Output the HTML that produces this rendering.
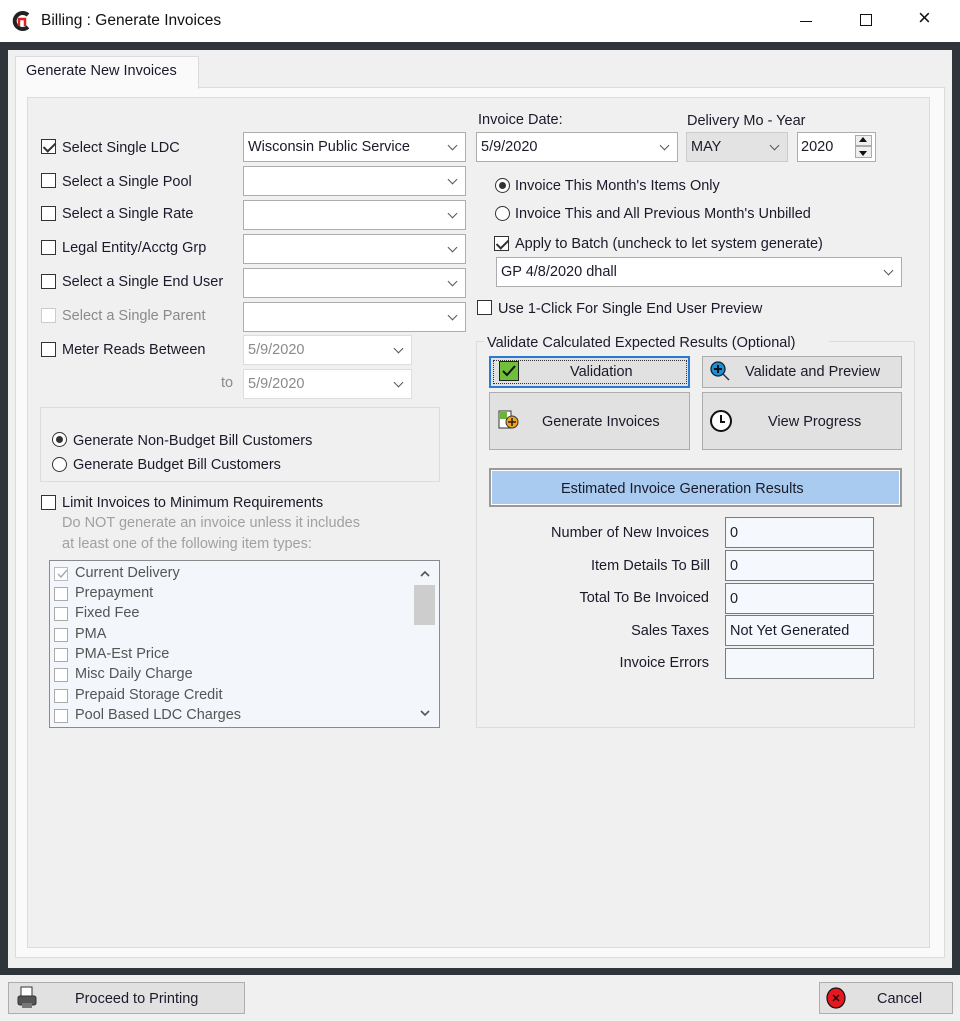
<!DOCTYPE html>
<html><head><meta charset="utf-8"><style>
*{box-sizing:border-box;margin:0;padding:0}
body{width:960px;height:1021px;position:relative;background:#2f353b;font-family:"Liberation Sans",sans-serif;font-size:14.5px;color:#1a1a2a;overflow:hidden}
.a{position:absolute}
.t{position:absolute;white-space:nowrap;line-height:18px}
.cb{position:absolute;width:15px;height:15px;border:1px solid #333;background:#fff}
.cb.k::after{content:"";position:absolute;left:4px;top:0px;width:5px;height:10px;border:solid #333;border-width:0 2px 2px 0;transform:rotate(45deg)}
.rb{position:absolute;width:15px;height:15px;border:1px solid #333;border-radius:50%;background:#fff}
.rb.k::after{content:"";position:absolute;left:3px;top:3px;width:7px;height:7px;border-radius:50%;background:#333}
.cmb{position:absolute;background:#fff;border:1px solid #adadad;height:30px}
.cmb span{position:absolute;left:4px;top:6px;white-space:nowrap}
.cmb::after{content:"";position:absolute;right:9px;top:9px;width:6px;height:6px;border:solid #555;border-width:0 1.3px 1.3px 0;transform:rotate(45deg)}
.btn{position:absolute;background:#e1e1e1;border:1px solid #adadad;}
.box{position:absolute;background:#f5f8fc;border:1px solid #7a7a7a;height:31px}
.box span{position:absolute;left:4px;top:7px}
.g{color:#8a8a8a}
.li{position:absolute;left:54px;color:#555}
.li i{position:absolute;left:0;top:2px;width:14px;height:14px;border:1px solid #aaa;background:#fff}
.li b{font-weight:normal;position:absolute;left:21px;white-space:nowrap}
</style></head><body>
<div class="a" style="left:0;top:0;width:960px;height:42px;background:#fff"></div>
<svg class="a" style="left:11px;top:10px" width="22" height="22" viewBox="0 0 22 22"><path d="M17 5A8 8 0 1 0 17 17" fill="none" stroke="#222" stroke-width="4"/><path d="M8 16V9h6v7" fill="none" stroke="#d22" stroke-width="2.5"/></svg>
<div class="t" style="left:41px;top:12px;font-size:15.5px;color:#111">Billing : Generate Invoices</div>
<div class="a" style="left:800px;top:21px;width:12px;height:1px;background:#111"></div>
<div class="a" style="left:860px;top:14px;width:12px;height:12px;border:1px solid #111"></div>
<div class="t" style="left:918px;top:9px;font-size:22px;color:#111">×</div>
<div class="a" style="left:8px;top:50px;width:944px;height:918px;background:#f0f0f0"></div>
<div class="a" style="left:0;top:975px;width:960px;height:46px;background:#f0f0f0"></div>
<div class="a" style="left:15px;top:87px;width:930px;height:871px;background:#fafafa;border:1px solid #dcdcdc"></div>
<div class="a" style="left:15px;top:56px;width:184px;height:33px;background:#fafafa;border:1px solid #dcdcdc;border-bottom:none"></div>
<div class="t" style="left:26px;top:62px">Generate New Invoices</div>
<div class="a" style="left:27px;top:97px;width:903px;height:851px;background:#f0f0f0;border:1px solid #dcdcdc"></div>

<div class="cb k" style="left:41px;top:139px"></div><div class="t" style="left:62px;top:139px">Select Single LDC</div>
<div class="cmb" style="left:243px;top:132px;width:223px"><span>Wisconsin Public Service</span></div>
<div class="cb" style="left:41px;top:173px"></div><div class="t" style="left:62px;top:173px">Select a Single Pool</div>
<div class="cmb" style="left:243px;top:166px;width:223px"></div>
<div class="cb" style="left:41px;top:206px"></div><div class="t" style="left:62px;top:205px">Select a Single Rate</div>
<div class="cmb" style="left:243px;top:200px;width:223px"></div>
<div class="cb" style="left:41px;top:240px"></div><div class="t" style="left:62px;top:239px">Legal Entity/Acctg Grp</div>
<div class="cmb" style="left:243px;top:234px;width:223px"></div>
<div class="cb" style="left:41px;top:274px"></div><div class="t" style="left:62px;top:273px">Select a Single End User</div>
<div class="cmb" style="left:243px;top:268px;width:223px"></div>
<div class="cb" style="left:41px;top:308px;border-color:#ccc"></div><div class="t g" style="left:62px;top:307px">Select a Single Parent</div>
<div class="cmb" style="left:243px;top:302px;width:223px"></div>
<div class="cb" style="left:41px;top:342px"></div><div class="t" style="left:62px;top:341px">Meter Reads Between</div>
<div class="cmb" style="left:243px;top:335px;width:169px;border-color:#ddd"><span class="g">5/9/2020</span></div>
<div class="t g" style="left:221px;top:374px">to</div>
<div class="cmb" style="left:243px;top:369px;width:169px;border-color:#ddd"><span class="g">5/9/2020</span></div>

<div class="a" style="left:40px;top:407px;width:400px;height:75px;border:1px solid #dcdcdc"></div>
<div class="rb k" style="left:52px;top:432px"></div><div class="t" style="left:73px;top:432px">Generate Non-Budget Bill Customers</div>
<div class="rb" style="left:52px;top:457px"></div><div class="t" style="left:73px;top:456px">Generate Budget Bill Customers</div>

<div class="cb" style="left:41px;top:495px"></div><div class="t" style="left:62px;top:494px">Limit Invoices to Minimum Requirements</div>
<div class="t g" style="left:62px;top:514px;color:#a0a0a0">Do NOT generate an invoice unless it includes</div>
<div class="t g" style="left:62px;top:535px;color:#a0a0a0">at least one of the following item types:</div>

<div class="a" style="left:49px;top:560px;width:391px;height:168px;background:#f3f6fb;border:1px solid #8a8a8a"></div>
<div class="a" style="left:414px;top:585px;width:21px;height:40px;background:#cdcdcd"></div>
<svg class="a" style="left:419px;top:569px" width="12" height="10"><path d="M2 7l4-4 4 4" fill="none" stroke="#555" stroke-width="1.6"/></svg>
<svg class="a" style="left:419px;top:708px" width="12" height="10"><path d="M2 3l4 4 4-4" fill="none" stroke="#555" stroke-width="1.6"/></svg>
<div class="li" style="top:565px"><i style="border-color:#bbb"></i><b>Current Delivery</b></div>
<div class="li" style="top:585px"><i></i><b>Prepayment</b></div>
<div class="li" style="top:605px"><i></i><b>Fixed Fee</b></div>
<div class="li" style="top:626px"><i></i><b>PMA</b></div>
<div class="li" style="top:646px"><i></i><b>PMA-Est Price</b></div>
<div class="li" style="top:666px"><i></i><b>Misc Daily Charge</b></div>
<div class="li" style="top:687px"><i></i><b>Prepaid Storage Credit</b></div>
<div class="li" style="top:707px"><i></i><b>Pool Based LDC Charges</b></div>
<svg class="a" style="left:55px;top:567px" width="14" height="14"><path d="M3 7l3 3 6-7" fill="none" stroke="#aaa" stroke-width="1.5"/></svg>

<div class="t" style="left:478px;top:111px">Invoice Date:</div>
<div class="cmb" style="left:476px;top:132px;width:202px"><span>5/9/2020</span></div>
<div class="t" style="left:687px;top:112px">Delivery Mo - Year</div>
<div class="cmb" style="left:686px;top:132px;width:102px;background:#e3e3e3;border-color:#ccc"><span>MAY</span></div>
<div class="a" style="left:797px;top:132px;width:79px;height:30px;background:#fff;border:1px solid #adadad"></div>
<div class="t" style="left:801px;top:138px">2020</div>
<div class="a" style="left:855px;top:135px;width:17px;height:11px;border:1px solid #aaa;background:#eee"></div>
<div class="a" style="left:855px;top:146px;width:17px;height:12px;border:1px solid #aaa;background:#eee"></div>
<div class="a" style="left:859px;top:137px;border:4px solid transparent;border-bottom:5px solid #111;border-top:0"></div>
<div class="a" style="left:859px;top:151px;border:4px solid transparent;border-top:5px solid #111;border-bottom:0"></div>

<div class="rb k" style="left:495px;top:178px"></div><div class="t" style="left:515px;top:177px">Invoice This Month's Items Only</div>
<div class="rb" style="left:495px;top:206px"></div><div class="t" style="left:515px;top:205px">Invoice This and All Previous Month's Unbilled</div>
<div class="cb k" style="left:494px;top:236px"></div><div class="t" style="left:515px;top:235px">Apply to Batch (uncheck to let system generate)</div>
<div class="cmb" style="left:496px;top:257px;width:406px"><span>GP 4/8/2020 dhall</span></div>
<div class="cb" style="left:477px;top:300px"></div><div class="t" style="left:498px;top:300px">Use 1-Click For Single End User Preview</div>

<div class="a" style="left:476px;top:341px;width:439px;height:387px;border:1px solid #dcdcdc"></div>
<div class="a" style="left:484px;top:334px;width:345px;height:16px;background:#f0f0f0"></div>
<div class="t" style="left:487px;top:334px">Validate Calculated Expected Results (Optional)</div>
<div class="btn" style="left:489px;top:356px;width:201px;height:32px;border:2px solid #2a7ad4"></div>
<div class="a" style="left:493px;top:360px;width:194px;height:24px;border:1px dotted #333"></div>
<div class="a" style="left:499px;top:361px;width:20px;height:20px;background:#6fbf3a;border:1px solid #222"></div>
<svg class="a" style="left:499px;top:361px" width="20" height="20"><path d="M4 10l4 4 8-9" fill="none" stroke="#111" stroke-width="2"/></svg>
<div class="t" style="left:570px;top:363px">Validation</div>
<div class="btn" style="left:702px;top:356px;width:200px;height:32px"></div>
<svg class="a" style="left:709px;top:360px" width="24" height="24"><circle cx="9" cy="9" r="7" fill="#1b8fd6" stroke="#123" stroke-width="1.3"/><path d="M9 5v8M5 9h8" stroke="#111" stroke-width="2"/><path d="M14 14l6 6" stroke="#333" stroke-width="1.5"/></svg>
<div class="t" style="left:745px;top:363px">Validate and Preview</div>
<div class="btn" style="left:489px;top:392px;width:201px;height:58px"></div>
<svg class="a" style="left:497px;top:410px" width="24" height="22"><rect x="2" y="1" width="12" height="17" fill="#fff" stroke="#333"/><rect x="3" y="2" width="7" height="7" fill="#6cb33e"/><circle cx="15" cy="12" r="6" fill="#f2a31f" stroke="#333"/><path d="M15 8v8M11 12h8" stroke="#222" stroke-width="1.5"/></svg>
<div class="t" style="left:542px;top:413px">Generate Invoices</div>
<div class="btn" style="left:702px;top:392px;width:200px;height:58px"></div>
<svg class="a" style="left:709px;top:409px" width="24" height="24"><circle cx="12" cy="12" r="10" fill="#fff" stroke="#111" stroke-width="2"/><path d="M12 6v7h4" fill="none" stroke="#111" stroke-width="2"/></svg>
<div class="t" style="left:768px;top:413px">View Progress</div>
<div class="a" style="left:489px;top:468px;width:413px;height:39px;background:#a8cbef;border:2px solid #999;box-shadow:inset 0 0 0 1px #fff"></div>
<div class="t" style="left:561px;top:480px">Estimated Invoice Generation Results</div>

<div class="t" style="left:480px;width:229px;text-align:right;top:524px">Number of New Invoices</div>
<div class="box" style="left:725px;top:517px;width:149px"><span>0</span></div>
<div class="t" style="left:480px;width:230px;text-align:right;top:557px">Item Details To Bill</div>
<div class="box" style="left:725px;top:550px;width:149px"><span>0</span></div>
<div class="t" style="left:480px;width:229px;text-align:right;top:589px">Total To Be Invoiced</div>
<div class="box" style="left:725px;top:583px;width:149px"><span>0</span></div>
<div class="t" style="left:480px;width:229px;text-align:right;top:622px">Sales Taxes</div>
<div class="box" style="left:725px;top:615px;width:149px"><span>Not Yet Generated</span></div>
<div class="t" style="left:480px;width:229px;text-align:right;top:654px">Invoice Errors</div>
<div class="box" style="left:725px;top:648px;width:149px"></div>

<div class="btn" style="left:8px;top:982px;width:237px;height:32px"></div>
<svg class="a" style="left:15px;top:985px" width="24" height="26"><rect x="6" y="2" width="11" height="9" fill="#fff" stroke="#333"/><rect x="3" y="11" width="18" height="9" rx="2" fill="#555" stroke="#333"/><rect x="7" y="18" width="10" height="5" fill="#777"/></svg>
<div class="t" style="left:75px;top:990px">Proceed to Printing</div>
<div class="btn" style="left:819px;top:982px;width:134px;height:32px"></div>
<svg class="a" style="left:826px;top:986px" width="22" height="24"><ellipse cx="10" cy="12" rx="9" ry="10" fill="#e8161e" stroke="#111" stroke-width="1.2"/><path d="M7 9l6 6M13 9l-6 6" stroke="#111" stroke-width="1.5"/></svg>
<div class="t" style="left:877px;top:990px">Cancel</div>
</body></html>
